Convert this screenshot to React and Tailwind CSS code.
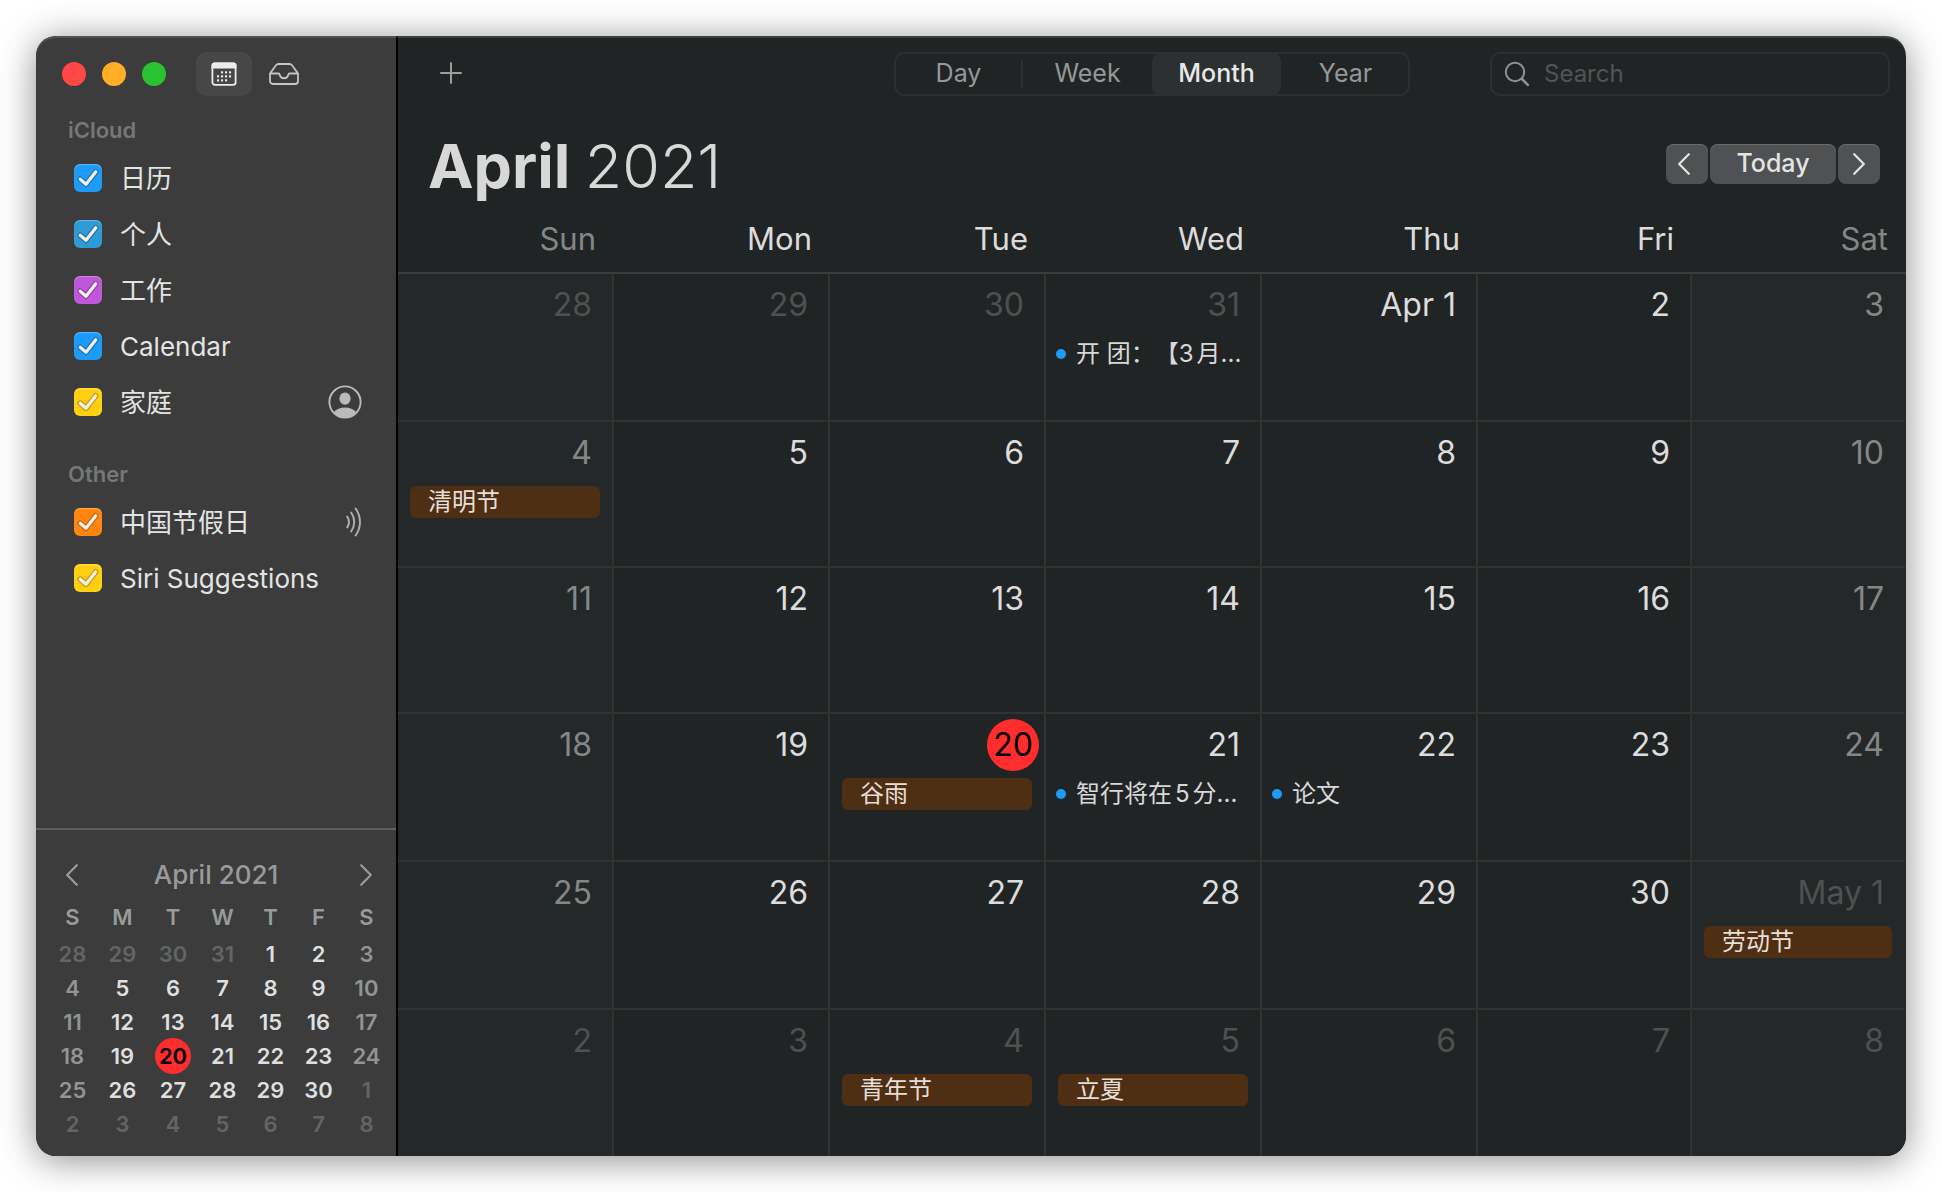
import { useState } from "react";

const ACCOUNTS = [
  {
    name: "iCloud",
    calendars: [
      { name: "日历", color: "bg-[#1e9bf8]" },
      { name: "个人", color: "bg-[#2f9ad6]" },
      { name: "工作", color: "bg-[#bf57da]" },
      { name: "Calendar", color: "bg-[#1e9bf8]" },
      { name: "家庭", color: "bg-[#ffcf12]", badge: "shared" },
    ],
  },
  {
    name: "Other",
    calendars: [
      { name: "中国节假日", color: "bg-[#ff850f]", badge: "subscribed" },
      { name: "Siri Suggestions", color: "bg-[#ffcf12]" },
    ],
  },
];

const WEEKDAYS = ["Sun", "Mon", "Tue", "Wed", "Thu", "Fri", "Sat"];
const VIEWS = ["Day", "Week", "Month", "Year"];

const EVENTS = {
  3: { title: "开 团：【3月...", timed: true },
  7: { title: "清明节" },
  23: { title: "谷雨" },
  24: { title: "智行将在5分...", timed: true },
  25: { title: "论文", timed: true },
  34: { title: "劳动节" },
  37: { title: "青年节" },
  38: { title: "立夏" },
};

// Six weeks starting on Sunday, 28 March 2021.
const DAYS = Array.from({ length: 42 }, (_, i) => {
  const date = new Date(2021, 2, 28 + i);
  const day = date.getDate();
  const inMonth = date.getMonth() === 3;
  const weekend = i % 7 === 0 || i % 7 === 6;
  const prefix = i === 4 ? "Apr " : i === 34 ? "May " : "";
  return { day, label: prefix + day, inMonth, weekend, today: inMonth && day === 20, event: EVENTS[i] };
});
const WEEKS = [0, 1, 2, 3, 4, 5].map((w) => DAYS.slice(w * 7, w * 7 + 7));

const MONTH_COLUMNS = "grid grid-cols-[repeat(5,216fr)_214fr_214fr]";
const MINI_COLUMNS = "grid grid-cols-[49fr_51fr_50fr_49fr_47fr_49fr_47fr]";

function Chevron({ dir, className }) {
  return (
    <svg viewBox="0 0 12 22" className={className} fill="none" stroke="currentColor" strokeWidth="2.2" strokeLinecap="round" strokeLinejoin="round" aria-hidden="true">
      <path d={dir === "left" ? "M10.8 1.2 1.2 11l9.6 9.8" : "M1.2 1.2 10.8 11l-9.6 9.8"} />
    </svg>
  );
}

function CalendarIcon() {
  const dots = [
    [10, 9.5], [14, 9.5], [18, 9.5],
    [6, 13.5], [10, 13.5], [14, 13.5], [18, 13.5],
    [6, 17.5], [10, 17.5], [14, 17.5],
  ];
  return (
    <svg viewBox="0 0 26 24" className="h-6 w-6.5" aria-hidden="true">
      <rect x="1.4" y="1.4" width="23.2" height="21.4" rx="2.6" fill="none" stroke="#ececec" strokeWidth="1.8" />
      <path d="M.5 3.500A3 3 0 0 1 3.500.5h19a3 3 0 0 1 3 3V6.400H.5z" fill="#ececec" />
      {dots.map(([x, y]) => (
        <rect key={x + "-" + y} x={x} y={y - 0.2} width="2.1" height="2.1" fill="#ececec" />
      ))}
    </svg>
  );
}

function InboxIcon() {
  return (
    <svg viewBox="0 0 30 22" className="h-5.5 w-7.5" fill="none" stroke="#c4c5c5" strokeWidth="1.8" strokeLinejoin="round" aria-hidden="true">
      <path d="M1 10.500 7 2.300C7.700 1.400 8.300 1 9.400 1h11.200c1.100 0 1.700.4 2.400 1.300L29 10.500V18a3 3 0 0 1-3 3H4a3 3 0 0 1-3-3z" />
      <path d="M1.200 10.500H9.300c.9 0 1.300.5 1.400 1.300a4.400 4.400 0 0 0 8.600 0c.1-.8.5-1.300 1.400-1.300h8.100" />
    </svg>
  );
}

function SharedIcon() {
  return (
    <svg viewBox="0 0 34 34" className="h-8.5 w-8.5" aria-label="Shared" role="img">
      <circle cx="17" cy="17" r="15.6" fill="none" stroke="#b9baba" strokeWidth="1.9" />
      <ellipse cx="17" cy="13.6" rx="5.6" ry="6.2" fill="#b9baba" />
      <path d="M5.800 27.200C8.200 24 12.300 22.400 17 22.400s8.800 1.600 11.200 4.800A15.600 15.600 0 0 1 17 32.600 15.600 15.600 0 0 1 5.800 27.200z" fill="#b9baba" />
    </svg>
  );
}

function SubscribedIcon() {
  return (
    <svg viewBox="0 0 16 30" className="h-7.5 w-4" fill="none" stroke="#b0b1b1" strokeWidth="1.9" strokeLinecap="round" aria-label="Subscribed" role="img">
      <path d="M1.200 9.500a10 10 0 0 1 0 11" />
      <path d="M5.200 5.500a16.500 16.500 0 0 1 0 19" />
      <path d="M9.600 1.500a23 23 0 0 1 0 27" />
    </svg>
  );
}

function CalendarRow({ calendar }) {
  const [checked, setChecked] = useState(true);
  return (
    <li className="flex h-14 items-center pr-[34px] pl-[38px]">
      <label className="flex flex-1 items-center gap-[18px]">
        <span className="relative h-7 w-7 shrink-0">
          <input
            type="checkbox"
            checked={checked}
            onChange={() => setChecked(!checked)}
            className={"block h-7 w-7 appearance-none rounded-md shadow-[inset_0_1px_1px_rgba(255,255,255,0.3)] " + calendar.color}
          />
          {checked && (
            <svg viewBox="0 0 28 28" className="pointer-events-none absolute inset-0 h-7 w-7" fill="none" strokeLinecap="round" strokeLinejoin="round" aria-hidden="true">
              <path d="M6.200 15.200 12 20.300 21.800 7.800" stroke="#000" strokeOpacity="0.24" strokeWidth="5.6" />
              <path d="M6.200 15.200 12 20.300 21.800 7.800" stroke="#f1efec" strokeWidth="3.2" />
            </svg>
          )}
        </span>
        <span className="pt-0.5 text-[26px] leading-8 text-[#e4e4e4]">{calendar.name}</span>
      </label>
      {calendar.badge === "shared" && <SharedIcon />}
      {calendar.badge === "subscribed" && <SubscribedIcon />}
    </li>
  );
}

function MiniCalendar() {
  return (
    <section className="border-t-2 border-[#5d5f5f] pt-[23px] pb-[15px] text-[#999b9a]" aria-label="Month navigator">
      <div className="flex h-11 items-center pr-6 pl-[30px]">
        <button type="button" aria-label="Previous month">
          <Chevron dir="left" className="h-5.5 w-3" />
        </button>
        <h2 className="flex-1 pr-1.5 text-center text-[26px] leading-8 font-medium">April 2021</h2>
        <button type="button" aria-label="Next month">
          <Chevron dir="right" className="h-5.5 w-3" />
        </button>
      </div>
      <table className="mt-0.5 flex flex-col pr-1.5 pl-3 text-[22px] font-semibold">
        <thead>
          <tr className={MINI_COLUMNS + " h-9 items-center"}>
            {WEEKDAYS.map((d) => (
              <th key={d} scope="col" className="font-semibold">{d[0]}</th>
            ))}
          </tr>
        </thead>
        <tbody className="pt-0.5 flex flex-col">
          {WEEKS.map((week, w) => (
            <tr key={w} className={MINI_COLUMNS + " h-[34px] items-center"}>
              {week.map((d) => (
                <td key={d.label} className="flex h-[34px] items-center justify-center">
                  <span
                    className={
                      d.today
                        ? "flex size-9 shrink-0 items-center justify-center rounded-full bg-[#ff2d2e] text-black"
                        : !d.inMonth
                          ? "text-[#636564]"
                          : d.weekend
                            ? "text-[#929493]"
                            : "text-[#dedfdf]"
                    }
                  >
                    {d.day}
                  </span>
                </td>
              ))}
            </tr>
          ))}
        </tbody>
      </table>
    </section>
  );
}

function Sidebar() {
  return (
    <aside className="flex w-[362px] shrink-0 flex-col border-r-2 border-black bg-[#3b3c3b]">
      <div className="flex items-center pt-4 pl-[26px]">
        <div className="flex gap-4">
          <button type="button" aria-label="Close" className="size-6 rounded-full bg-[#ff4746]" />
          <button type="button" aria-label="Minimize" className="size-6 rounded-full bg-[#ffae26]" />
          <button type="button" aria-label="Zoom" className="size-6 rounded-full bg-[#29c231]" />
        </div>
        <button type="button" aria-label="Calendars" className="ml-[30px] flex h-11 w-14 items-center justify-center rounded-[10px] bg-[#464746]">
          <CalendarIcon />
        </button>
        <button type="button" aria-label="Inbox" className="flex h-11 w-16 items-center justify-center">
          <InboxIcon />
        </button>
      </div>
      <div className="mt-5 mb-6 flex flex-col gap-[30px]">
        {ACCOUNTS.map((account) => (
          <section key={account.name}>
            <h2 className="mb-1.5 pl-8 text-[22px] leading-7 font-semibold text-[#767877]">{account.name}</h2>
            <ul>
              {account.calendars.map((c) => (
                <CalendarRow key={c.name} calendar={c} />
              ))}
            </ul>
          </section>
        ))}
      </div>
      <div className="mt-auto">
        <MiniCalendar />
      </div>
    </aside>
  );
}

function Toolbar() {
  const [view, setView] = useState("Month");
  return (
    <div className="flex items-center pt-4 pr-4 pl-[41px]">
      <button type="button" aria-label="New event" className="text-[#9c9e9e]">
        <svg viewBox="0 0 24 24" className="size-6" stroke="currentColor" strokeWidth="2" strokeLinecap="round" aria-hidden="true">
          <path d="M12 1v20M2 11h20" />
        </svg>
      </button>
      <div className="ml-auto grid h-11 w-[516px] grid-cols-4 rounded-[10px] shadow-[inset_0_0_0_2px_#2b2f2f]">
        {VIEWS.map((v) => (
          <button
            key={v}
            type="button"
            aria-pressed={v === view}
            onClick={() => setView(v)}
            className={
              "relative rounded-[10px] text-[25px] " +
              (v === view ? "bg-[#2c3031] font-medium text-[#e8e8e8]" : "text-[#969898]")
            }
          >
            {v}
            {v === "Day" && <span className="absolute top-2 right-0 h-7 w-0.5 bg-[#2b2f2f]" />}
          </button>
        ))}
      </div>
      <label className="ml-20 flex h-11 w-[400px] items-center gap-3.5 rounded-[10px] border-2 border-[#2b2f2f] px-3">
        <svg viewBox="0 0 26 26" className="size-6.5 shrink-0" fill="none" stroke="#8f9191" strokeLinecap="round" aria-hidden="true">
          <circle cx="11" cy="11" r="9.2" strokeWidth="2" />
          <path d="m18 18 5.800 5.800" strokeWidth="2.6" />
        </svg>
        <input type="search" aria-label="Search" placeholder="Search" className="w-full min-w-0 bg-transparent text-2xl text-[#dcdcdc] outline-none placeholder:text-[#525455]" />
      </label>
    </div>
  );
}

function MonthEvent({ event }) {
  if (event.timed) {
    return (
      <div className="ml-2.5 flex h-8 items-center gap-2.5 text-2xl text-[#d8d8d8]">
        <span className="size-2.5 shrink-0 rounded-full bg-[#1e9bf8]" />
        <span className="overflow-hidden whitespace-nowrap [text-autospace:normal] [text-spacing-trim:space-all]">{event.title}</span>
      </div>
    );
  }
  return (
    <div className="mx-3 flex h-8 items-center rounded-md bg-[#4e2f14] px-[18px] text-2xl whitespace-nowrap text-[#e6dfd8]">
      {event.title}
    </div>
  );
}

function DayCell({ d, lastColumn, lastRow }) {
  const tone = d.today
    ? "mr-[5px] w-13 justify-center rounded-full bg-[#ff2d2e] text-black"
    : "pr-5 " + (!d.inMonth ? "text-[#4e5151]" : d.weekend ? "text-[#848787]" : "text-[#dcdcdc]");
  return (
    <td
      className={
        "min-w-0 border-r-2 border-b-[#313333] pt-[5px] " +
        (lastColumn ? "border-r-transparent " : "border-r-[#313333] ") +
        (lastRow ? "" : "border-b-2 ") +
        (d.weekend ? "bg-[#242829]" : "")
      }
    >
      <div className="mb-[7px] flex justify-end">
        <span className={"flex h-13 items-center text-[32px] " + tone}>{d.label}</span>
      </div>
      {d.event && <MonthEvent event={d.event} />}
    </td>
  );
}

function MonthGrid() {
  return (
    <table className="flex flex-1 flex-col">
      <thead className="border-b-2 border-[#3d3c3d]">
        <tr className={MONTH_COLUMNS + " h-17 items-center pt-0.5"}>
          {WEEKDAYS.map((name, i) => (
            <th
              key={name}
              scope="col"
              className={"pr-[18px] text-right text-[31px] font-normal " + (i === 0 || i === 6 ? "text-[#848787]" : "text-[#dcdcdc]")}
            >
              {name}
            </th>
          ))}
        </tr>
      </thead>
      <tbody className="grid flex-1 grid-rows-[148fr_146fr_146fr_148fr_148fr_146fr]">
        {WEEKS.map((week, w) => (
          <tr key={w} className={MONTH_COLUMNS}>
            {week.map((d, i) => (
              <DayCell key={d.label} d={d} lastColumn={i === 6} lastRow={w === 5} />
            ))}
          </tr>
        ))}
      </tbody>
    </table>
  );
}

const NAV_BUTTON = "flex h-10 items-center justify-center rounded-lg bg-[#505152] text-[#e4e4e4] shadow-[inset_0_1px_0_#6a6b6c]";

export default function App() {
  return (
    <div className="flex min-h-screen bg-white p-9 font-['Inter','Noto_Sans_CJK_SC',sans-serif]">
      <div className="relative flex flex-1 rounded-[20px] shadow-[0_4px_36px_rgba(0,0,0,0.45)]">
        <div className="flex flex-1 overflow-hidden rounded-[20px] bg-[#212425]">
          <Sidebar />
          <main className="flex min-w-0 flex-1 flex-col">
            <Toolbar />
            <header className="mt-7 flex h-20 items-center justify-between pr-[26px] pl-[30px]">
              <h1 className="pt-1 text-[61px] leading-none font-bold text-[#d8d8d8]">
                April <span className="font-light">2021</span>
              </h1>
              <div className="flex gap-0.5">
                <button type="button" aria-label="Previous month" className={NAV_BUTTON + " w-[42px] pr-1.5"}>
                  <Chevron dir="left" className="h-5.5 w-3" />
                </button>
                <button type="button" className={NAV_BUTTON + " w-[126px] text-[25px] font-medium"}>Today</button>
                <button type="button" aria-label="Next month" className={NAV_BUTTON + " w-[42px]"}>
                  <Chevron dir="right" className="h-5.5 w-3" />
                </button>
              </div>
            </header>
            <MonthGrid />
          </main>
        </div>
        <div className="pointer-events-none absolute inset-0 rounded-[20px] shadow-[inset_0_2px_0_rgba(255,255,255,0.12)]" />
      </div>
    </div>
  );
}
